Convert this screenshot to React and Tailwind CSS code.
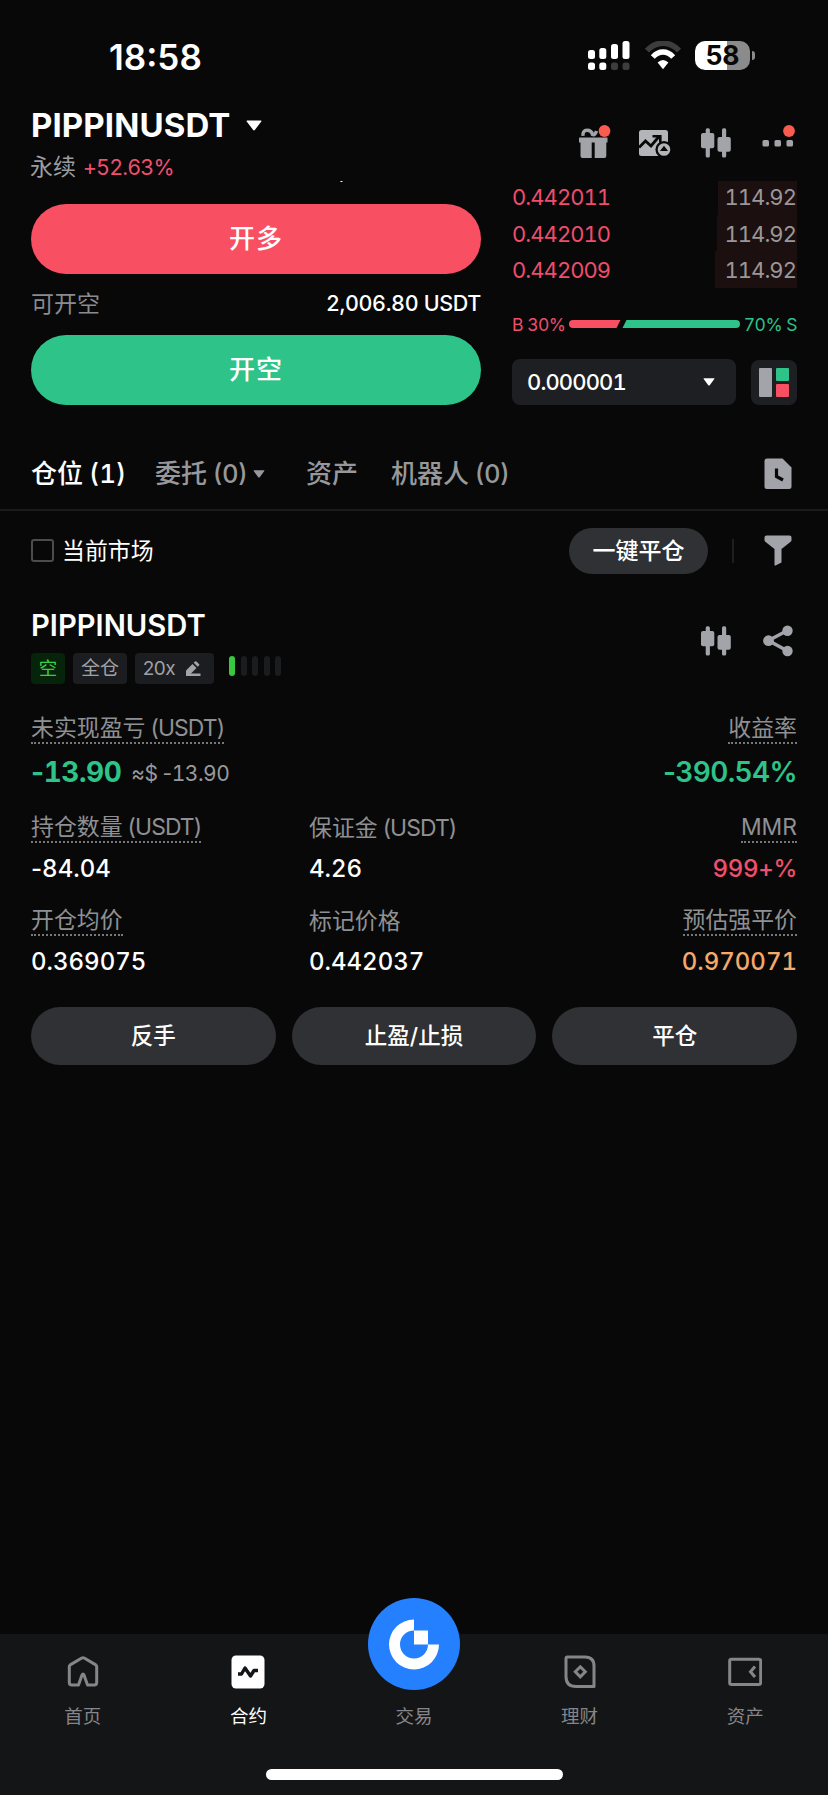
import React from "react";

const NUM = "tabular-nums whitespace-nowrap";

function Caret({ className }) {
  return (
    <svg viewBox="0 0 16 11" className={className} fill="currentColor">
      <path d="M1.2 0.5h13.6q1.3 0 .5 1L9 9.8q-1 1.2-2 0L.7 1.5Q-.1.5 1.2.5Z" />
    </svg>
  );
}

function StatusBar() {
  return (
    <div className="flex h-[95px] items-start pl-[109px]">
      <div className="mt-[39px] h-[36px] w-[478px] text-[35px] leading-[36px] font-semibold whitespace-nowrap">18:58</div>
      <svg className="mt-[41px] h-[29px] w-[43px]" viewBox="0 0 43 29">
        <g fill="#fff">
          <rect x="1" y="9" width="7" height="9" rx="2.5" />
          <rect x="12.3" y="7" width="7" height="11" rx="2.5" />
          <rect x="24" y="3" width="7" height="15" rx="2.5" />
          <rect x="35.5" y="0" width="7" height="18" rx="2.5" />
          <rect x="1" y="21.5" width="7" height="7.5" rx="2.5" />
          <rect x="12.3" y="21.5" width="7" height="7.5" rx="2.5" />
        </g>
        <rect x="24" y="21.5" width="7" height="7.5" rx="2.5" fill="#3d3d3d" />
        <rect x="35.5" y="21.5" width="7" height="7.5" rx="2.5" fill="#3d3d3d" />
      </svg>
      <svg className="mt-[41px] ml-[13.500px] h-[29px] w-[38px]" viewBox="0 0 38 29" fill="none">
        <path d="M3 9.700C12 -0.300 26 -0.300 35 9.700" stroke="#3d3d3d" strokeWidth="5.600" />
        <path d="M8.800 16C15 9.300 23 9.300 29.200 16" stroke="#fff" strokeWidth="5.400" />
        <path d="M13.600 21.600q5.400-5 10.800 0L19 28.200Z" fill="#fff" />
      </svg>
      <div className="mt-[41px] ml-[13.500px] flex items-center">
        <div className="flex h-[29px] w-[55px] items-center justify-center rounded-[10px] bg-linear-to-r from-white from-58% to-[#8b8b8b] to-58% text-[26.500px] leading-none font-bold text-[#080808]">58</div>
        <div className="ml-[2px] h-[9px] w-[3px] rounded-r-full bg-[#8b8b8b]" />
      </div>
    </div>
  );
}

function Candles() {
  return (
    <svg className="h-[30px] w-[30px]" viewBox="0 0 30 30" fill="#a3a4a9">
      <rect x="0" y="5" width="13.3" height="15.3" rx="2" />
      <rect x="4.7" y="0.3" width="4.2" height="29.2" rx="1.6" />
      <rect x="16.5" y="9" width="13.3" height="14.8" rx="2" />
      <rect x="21" y="0.3" width="4.2" height="29.2" rx="1.6" />
    </svg>
  );
}

function Header() {
  return (
    <div className="flex h-[86px] justify-between pr-[33px] pl-[30px]">
      <div>
        <div className="mt-[12px] flex h-[36px] items-center">
          <span className="w-[216px] pl-px text-[33px] leading-none font-bold tracking-[0.100px]">PIPPINUSDT</span>
          <Caret className="h-[11px] w-[16px]" />
        </div>
        <div className="mt-[12px] flex h-[24px] items-center gap-[7px] leading-none">
          <span className="pt-px text-[23px] text-[#9b9ca0]">永续</span>
          <span className={NUM + " pt-[2px] text-[21.500px] tracking-[-0.850px] text-[#f04f6d]"}>+52.63%</span>
        </div>
      </div>
      <div className="flex items-start">
        <svg className="mt-[30px] h-[34px] w-[34px]" viewBox="0 0 34 34" fill="#a3a4a9">
          <path d="M0.500 12.500H28.500V17.500H27.300V31Q27.300 33 25.300 33H3.500Q1.500 33 1.500 31V17.500H0V13.500Q0 12.500 .5 12.500Z" />
          <path d="M14.200 17.500v16.500" stroke="#080808" strokeWidth="3" />
          <path d="M4 10.800Q3.500 5.300 8 5.300T13.500 9.500Q16 10.800 17.500 6" fill="none" stroke="#a3a4a9" strokeWidth="3.400" />
          <circle cx="25.500" cy="6" r="5.900" fill="#fa5b4f" />
        </svg>
        <svg className="mt-[35px] ml-[26px] h-[27px] w-[32px]" viewBox="0 0 32 27" fill="none">
          <rect x="0" y="0" width="29" height="26" rx="2.500" fill="#b4b5b9" />
          <path d="M0 17.500L6.500 11l5.500 5 8-9.500" stroke="#080808" strokeWidth="2.800" />
          <path d="M13.500 6.300h7.800v6.500" stroke="#080808" strokeWidth="2.600" />
          <circle cx="25" cy="19.500" r="8.600" fill="#080808" />
          <circle cx="25" cy="19.500" r="6.300" fill="#b4b5b9" />
          <path d="M25 15.800l4 5.200h-8Z" fill="#080808" />
        </svg>
        <div className="mt-[33px] ml-[30px]"><Candles /></div>
        <svg className="mt-[30px] ml-[31px] h-[24px] w-[33px]" viewBox="0 0 33 24" fill="#a3a4a9">
          <rect x="0.500" y="15" width="6.500" height="6.500" rx="1.500" />
          <rect x="12.500" y="15" width="6.500" height="6.500" rx="1.500" />
          <rect x="24.500" y="15" width="6.500" height="6.500" rx="1.500" />
          <circle cx="27" cy="6" r="5.900" fill="#fa5b4f" />
        </svg>
      </div>
    </div>
  );
}

function Available({ label }) {
  return (
    <div className="flex h-[26px] items-center justify-between leading-none">
      <span className="pt-px text-[23px] text-[#8a8b8f]">{label}</span>
      <span className={NUM + " pt-px text-[21.500px] font-medium tracking-[-0.350px]"}>2,006.80 USDT</span>
    </div>
  );
}

function OrderForm() {
  return (
    <div className="w-[450px]">
      <div className="flex h-[3px] flex-col justify-end overflow-hidden">
        <div className="mb-px"><Available label="可开多" /></div>
      </div>
      <button className="mt-[19.500px] flex h-[70px] w-full items-center justify-center rounded-full bg-[#f94f63] pt-px text-[26px] leading-none font-medium tracking-[1px]">开多</button>
      <div className="mt-[17px] mb-[18px]"><Available label="可开空" /></div>
      <button className="flex h-[70px] w-full items-center justify-center rounded-full bg-[#2dc389] pt-px text-[26px] leading-none font-medium tracking-[1px]">开空</button>
    </div>
  );
}

function BookRow({ price, depth }) {
  return (
    <div className="flex h-[36.600px] shrink-0 items-center justify-between leading-none">
      <span className={NUM + " pt-px text-[22px] tracking-[-0.950px] text-[#ef4d6c]"}>{price}</span>
      <span className={NUM + " flex h-full items-center justify-end bg-[#1c0f10] pt-px pr-px text-[22px] tracking-[-0.950px] text-[#9b9799] " + depth}>114.92</span>
    </div>
  );
}

function OrderBook() {
  return (
    <div className="flex w-[285px] flex-col">
      <div className="flex h-[107px] flex-col justify-end overflow-hidden">
        <BookRow price="0.442011" depth="w-[79px]" />
        <BookRow price="0.442010" depth="w-[80.500px]" />
        <BookRow price="0.442009" depth="w-[82px]" />
      </div>
      <div className="mt-[24px] flex h-[24px] items-center justify-between text-[17.500px] leading-none tracking-[-0.500px]">
        <span className={NUM + " pt-px text-[#ef4d6c]"}>B 30%</span>
        <svg className="h-[8px] w-[171px]" viewBox="0 0 171 8">
          <path d="M4 0H51.500L47.500 8H4A4 4 0 0 1 4 0Z" fill="#f94f63" />
          <path d="M57.500 0H167A4 4 0 0 1 167 8H53.500Z" fill="#2dc389" />
        </svg>
        <span className={NUM + " pt-px text-[#2dc389]"}>70% S</span>
      </div>
      <div className="mt-[22.500px] flex items-end justify-between">
        <div className="flex h-[46px] w-[224px] items-center justify-between rounded-[8px] bg-[#1e1f22] pr-[21.500px] pl-[15px]">
          <span className={NUM + " pt-px text-[22px] leading-none font-medium tracking-[-0.850px]"}>0.000001</span>
          <Caret className="mt-px h-[8px] w-[12px]" />
        </div>
        <div className="flex h-[45px] w-[46px] items-center justify-center gap-[4px] rounded-[8px] bg-[#1e1f22]">
          <div className="h-[29px] w-[13px] rounded-[1px] bg-[#a3a4a9]" />
          <div className="flex flex-col gap-[3px]">
            <div className="h-[13px] w-[13px] rounded-[1px] bg-[#2dc389]" />
            <div className="h-[13px] w-[13px] rounded-[1px] bg-[#f94f63]" />
          </div>
        </div>
      </div>
    </div>
  );
}

function Tabs() {
  return (
    <div className="mt-[34px] flex h-[72px] items-center border-b-2 border-[#1a1b1c] pt-px pr-[36px] pl-[31px] text-[26px] leading-none font-medium whitespace-nowrap text-[#97989c]">
      <div className="w-[124px] text-white">仓位<span className="pl-[6px] text-[26px] tabular-nums">(1)</span></div>
      <div className="flex w-[151px] items-center">
        <span className="w-[98px]">委托<span className="pl-[6px] text-[25px]">(0)</span></span>
        <Caret className="h-[8px] w-[12px]" />
      </div>
      <div className="w-[85px]">资产</div>
      <div className="flex-1">机器人<span className="pl-[6px] text-[25px]">(0)</span></div>
      <svg className="h-[32px] w-[28px]" viewBox="0 0 28 32">
        <path d="M3 .5H18.500L27.500 9.500V28.500q0 2.500-2.500 2.500H3Q.5 31 .5 28.500V3Q.5.5 3 .5Z" fill="#a3a4a9" />
        <path d="M12.500 10.500V18.500L19 22" fill="none" stroke="#080808" strokeWidth="3.200" />
      </svg>
    </div>
  );
}

function FilterRow() {
  return (
    <div className="mt-[17px] flex h-[46px] items-center pr-[36px] pl-[30.500px]">
      <div className="h-[23px] w-[23px] rounded-[3px] border-2 border-[#4b4c4f]" />
      <span className="ml-[8.500px] flex-1 pt-[2px] text-[22.900px] leading-none">当前市场</span>
      <button className="flex h-[46px] w-[139px] items-center justify-center rounded-full bg-[#303134] pt-px text-[23px] leading-none font-medium">一键平仓</button>
      <div className="ml-[24px] h-[24px] w-[2px] bg-[#1e1f20]" />
      <svg className="ml-[30px] h-[31px] w-[28px]" viewBox="0 0 28 31">
        <path d="M2.500.5h23q2 0 2 2v2.500q0 1-.8 1.700L17.500 14V27.500L11.500 30.500Q10.500 31 10.500 29.500V14L1.300 6.700Q.5 6 .5 5V2.500Q.5.5 2.500.5Z" fill="#a3a4a9" />
      </svg>
    </div>
  );
}

const TAG = "flex h-[31px] items-center justify-center rounded-[4px] bg-[#1c1d20] pt-px text-[19px] leading-none text-[#a0a1a5]";

function PositionHead() {
  return (
    <div className="mt-[38px] flex h-[72px] justify-between">
      <div>
        <div className="mt-px flex h-[26px] items-center text-[29.200px] leading-none font-semibold">PIPPINUSDT</div>
        <div className="mt-[14px] flex items-center">
          <span className="flex h-[31px] w-[34px] items-center justify-center rounded-[4px] bg-[#06240a] pt-px text-[18.500px] leading-none text-[#3ecb49]">空</span>
          <span className={TAG + " ml-[8px] w-[54px]"}>全仓</span>
          <span className={TAG + " ml-[8px] w-[79px] gap-[10px] pr-[5px] tracking-[-0.500px]"}>
            20x
            <svg className="h-[16px] w-[16px]" viewBox="0 0 16 16" fill="#a3a4a9">
              <path d="M1 9.500L7.500 3l4 4L5 13.500H1Z" />
              <path d="M8.700 1.800L10 .5q.8-.7 1.500 0l2.500 2.500q.7.7 0 1.500l-1.300 1.300Z" />
              <path d="M1 12.500H15.500V15H1Z" />
            </svg>
          </span>
          <div className="mb-[4px] ml-[15px] flex gap-[5.600px]">
            <i className="h-[20px] w-[6px] rounded-full bg-[#39c740]" />
            <i className="h-[20px] w-[6px] rounded-full bg-[#1b1c1d]" />
            <i className="h-[20px] w-[6px] rounded-full bg-[#1b1c1d]" />
            <i className="h-[20px] w-[6px] rounded-full bg-[#1b1c1d]" />
            <i className="h-[20px] w-[6px] rounded-full bg-[#1b1c1d]" />
          </div>
        </div>
      </div>
      <div className="mt-[13px] flex items-start gap-[32px] pr-[4px]">
        <div className="mt-px"><Candles /></div>
        <svg className="h-[32px] w-[30px]" viewBox="0 0 30 32" fill="#a3a4a9">
          <path d="M24.500 5.500L5.500 15.500L24.500 26" fill="none" stroke="#a3a4a9" strokeWidth="3.500" />
          <circle cx="5.500" cy="15.700" r="5.400" />
          <circle cx="24.500" cy="5.700" r="5.200" />
          <circle cx="24.500" cy="26" r="5.200" />
        </svg>
      </div>
    </div>
  );
}

function Label({ children, unit, plain }) {
  return (
    <span className={"flex h-[28px] items-center text-[22.900px] leading-none whitespace-nowrap text-[#8f9093] " + (plain ? "" : "border-b-2 border-dotted border-[#77787b]")}>
      {children}
      {unit && <span className="pl-[5px] tracking-[-0.900px]">{unit}</span>}
    </span>
  );
}

function Value({ children }) {
  return children.startsWith("-") ? (
    <>
      <span className="proportional-nums">-</span>
      {children.slice(1)}
    </>
  ) : (
    children
  );
}

function Cell({ label, unit, plain, value, tone = "text-white", end }) {
  return (
    <div className={"flex flex-col " + (end ? "items-end" : "items-start")}>
      <div><Label plain={plain} unit={unit}>{label}</Label></div>
      <div className={NUM + " mt-[13px] flex h-[26px] items-center text-[24px] leading-none font-medium " + tone}><Value>{value}</Value></div>
    </div>
  );
}

function Position() {
  return (
    <div className="px-[31px]">
      <PositionHead />
      <div className="mt-[32px] flex h-[99px] justify-between">
        <div>
          <div className="flex"><Label unit="(USDT)">未实现盈亏</Label></div>
          <div className="mt-[15px] flex h-[26px] items-center gap-[10px] leading-none">
            <span className={NUM + " text-[28px] font-bold tracking-[-0.450px] text-[#2dc389]"}><Value>-13.90</Value></span>
            <span className={NUM + " mt-[4px] text-[21px] tracking-[-0.500px] text-[#98999c]"}>≈$ <Value>-13.90</Value></span>
          </div>
        </div>
        <div className="flex flex-col items-end">
          <div className="flex"><Label>收益率</Label></div>
          <div className={NUM + " mt-[15px] flex h-[26px] items-center text-[28px] leading-none font-semibold tracking-[-0.650px] text-[#2dc389]"}><Value>-390.54%</Value></div>
        </div>
      </div>
      <div className="grid grid-cols-[278px_1fr_auto] gap-y-[26px]">
        <Cell label="持仓数量" unit="(USDT)" value="-84.04" />
        <Cell label="保证金" unit="(USDT)" value="4.26" plain />
        <Cell label="MMR" value="999+%" tone="text-[#f04f6d] tracking-[-0.300px]" end />
        <Cell label="开仓均价" value="0.369075" />
        <Cell label="标记价格" value="0.442037" plain />
        <Cell label="预估强平价" value="0.970071" tone="text-[#f5a96a]" end />
      </div>
      <div className="mt-[32px] grid grid-cols-3 gap-[16px]">
        {["反手", "止盈/止损", "平仓"].map((t) => (
          <button key={t} className="flex h-[58px] items-center justify-center rounded-full bg-[#303134] pt-px text-[22.500px] leading-none font-medium">{t}</button>
        ))}
      </div>
    </div>
  );
}

function NavItem({ label, active, children }) {
  return (
    <div className="flex flex-col items-center">
      <div className="mt-[20px] flex h-[35px] items-center">{children}</div>
      <span className={"mt-[17px] text-[18.500px] leading-[20px] " + (active ? "text-white" : "text-[#85868a]")}>{label}</span>
    </div>
  );
}

function BottomNav() {
  return (
    <div className="flex h-[161px] flex-col items-center bg-[#141517]">
      <div className="grid h-[135px] w-full grid-cols-5">
        <NavItem label="首页">
          <svg className="h-[34px] w-[34px]" viewBox="0 0 34 34" fill="none" stroke="#85868a" strokeWidth="3" strokeLinejoin="round">
            <path d="M3.300 11.500Q3.300 10.500 4.200 9.900L15.800 3Q17 2.300 18.200 3L29.800 9.900Q30.700 10.500 30.700 11.500V27.500Q30.700 30 28.200 30H21.500L18 20Q17 18 16 20L12.500 30H5.800Q3.300 30 3.300 27.500Z" />
          </svg>
        </NavItem>
        <NavItem label="合约" active>
          <svg className="h-[34px] w-[34px]" viewBox="0 0 34 34">
            <rect x="0.500" y="0.500" width="33" height="33" rx="4.500" fill="#fff" />
            <path d="M7 19H10.500L14 13L19.500 21L23 15.500H27" fill="none" stroke="#141517" strokeWidth="3.400" strokeLinejoin="round" />
          </svg>
        </NavItem>
        <NavItem label="交易">
          <div className="relative h-full w-[92px]">
            <svg className="absolute -top-[56px] left-0 h-[92px] w-[92px]" viewBox="0 0 92 92">
              <circle cx="46" cy="46" r="46" fill="#2580ff" />
              <path d="M46 21.500A25 25 0 1 0 71 46.500H60A14 14 0 1 1 46 32.500Z" fill="#fff" />
              <rect x="46" y="32.500" width="14" height="14" fill="#fff" />
            </svg>
          </div>
        </NavItem>
        <NavItem label="理财">
          <svg className="h-[34px] w-[34px]" viewBox="0 0 34 34" fill="none" stroke="#85868a" strokeWidth="3">
            <path d="M4.500 2H22Q31 2 31 11V31.500H13Q3 31.500 3 21.500V3.500Q3 2 4.500 2Z" strokeLinejoin="round" />
            <path d="M17.300 11.800L22.300 16.800L17.300 21.800L12.300 16.800Z" />
          </svg>
        </NavItem>
        <NavItem label="资产">
          <svg className="h-[34px] w-[34px]" viewBox="0 0 34 34" fill="none" stroke="#85868a" strokeWidth="3">
            <rect x="1.700" y="4.200" width="31" height="25.300" rx="1.800" />
            <path d="M27 11.500L22.500 16.800L27 22" />
          </svg>
        </NavItem>
      </div>
      <div className="h-[11px] w-[297px] rounded-full bg-white" />
    </div>
  );
}

export default function App() {
  return (
    <div lang="zh-CN" className="flex h-[1795px] w-[828px] flex-col overflow-hidden bg-[#080808] font-[Inter,'Noto_Sans_CJK_SC',sans-serif] text-white">
      <StatusBar />
      <Header />
      <div className="flex justify-between pr-[31px] pl-[31px]">
        <OrderForm />
        <OrderBook />
      </div>
      <Tabs />
      <FilterRow />
      <Position />
      <div className="flex-1" />
      <BottomNav />
    </div>
  );
}
